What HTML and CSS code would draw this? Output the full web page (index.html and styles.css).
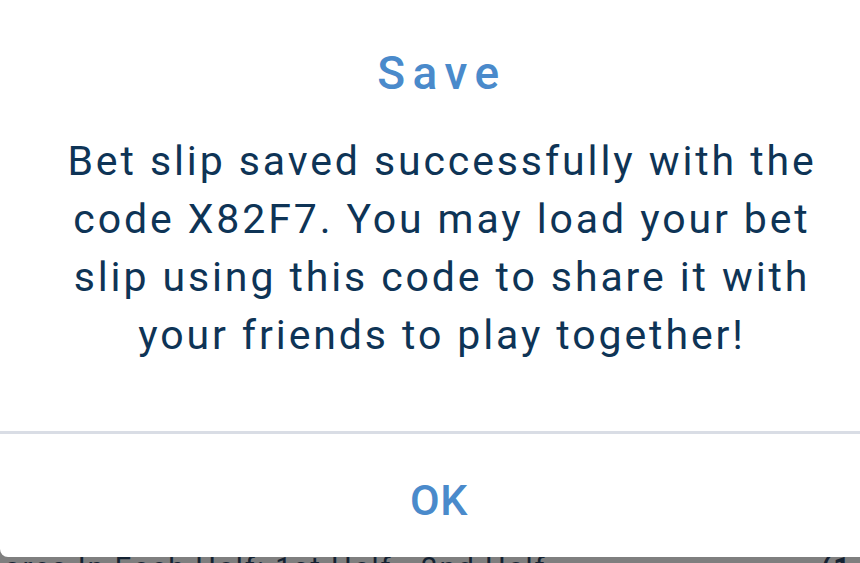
FILE: index.html
```html
<!DOCTYPE html>
<html>
<head>
<meta charset="utf-8">
<link rel="stylesheet" href="styles.css">
</head>
<body>
<div class="screen">
  <div class="dialog">
    <div class="dialog-body">
      <h1 class="title">Save</h1>
      <p class="message">Bet slip saved successfully with the code X82F7. You may load your bet slip using this code to share it with your friends to play together!</p>
    </div>
    <div class="divider"></div>
    <div class="actions">
      <button class="ok">OK</button>
    </div>
  </div>
  <div class="behind">
    <span class="behind-text">ores In Each Half: 1st Half - 2nd Half</span>
    <span class="behind-mark">(1</span>
  </div>
</div>
</body>
</html>
```
FILE: styles.css
```css
html, body {
  margin: 0;
  padding: 0;
}
body {
  width: 860px;
  height: 563px;
  overflow: hidden;
  background: #7f7f7f;
  font-family: Roboto, "Noto Sans", sans-serif;
}
.screen {
  display: flex;
  flex-direction: column;
  height: 563px;
}
.dialog {
  position: relative;
  z-index: 1;
  width: 884px;
  background: #ffffff;
  height: 557px;
  border-radius: 0 0 8px 8px;
  display: flex;
  flex-direction: column;
  flex-shrink: 0;
}
.dialog-body {
  height: 431px;
  padding: 0 50px;
  box-sizing: border-box;
  text-align: center;
}
.title {
  margin: 0;
  padding-top: 46px;
  font-size: 46px;
  line-height: 54px;
  font-weight: 500;
  letter-spacing: 7.5px;
  color: #4a8acb;
}
.message {
  margin: 32px 0 0;
  font-size: 41px;
  line-height: 58px;
  font-weight: 400;
  letter-spacing: 2.9px;
  color: #0e3456;
}
.divider {
  height: 3px;
  background: #d9dde5;
}
.actions {
  flex: 1;
  display: flex;
  justify-content: center;
  align-items: center;
  padding: 8px 6px 0 0;
}
.ok {
  border: none;
  background: none;
  font-family: Roboto, "Noto Sans", sans-serif;
  font-size: 43px;
  font-weight: 500;
  letter-spacing: 0.5px;
  color: #4a8acb;
  padding: 0;
}
.behind {
  margin-top: -3px;
  display: flex;
  justify-content: space-between;
  padding: 0 8px 0 4px;
  font-size: 29px;
  line-height: 28px;
  letter-spacing: 2px;
  color: #152232;
  white-space: nowrap;
}
.behind-mark {
  font-weight: 700;
}
```
